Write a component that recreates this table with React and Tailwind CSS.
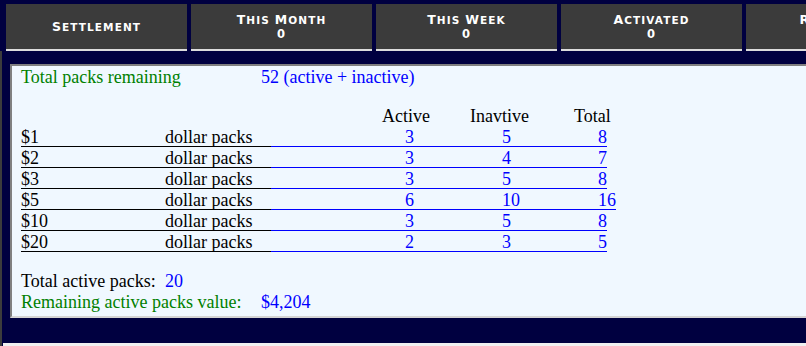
const tabs = [
    { label: 'Settlement' },
    { label: 'This Month', value: '0' },
    { label: 'This Week', value: '0' },
    { label: 'Activated', value: '0' },
    { label: 'Returned', value: '0' },
];

const packs = [
    { amount: '$1', active: 3, inactive: 5, total: 8 },
    { amount: '$2', active: 3, inactive: 4, total: 7 },
    { amount: '$3', active: 3, inactive: 5, total: 8 },
    { amount: '$5', active: 6, inactive: 10, total: 16 },
    { amount: '$10', active: 3, inactive: 5, total: 8 },
    { amount: '$20', active: 2, inactive: 3, total: 5 },
];

// hand-rolled small caps: big first letter, smaller uppercase rest
function SmallCaps({ text }) {
    return (
        <span>
            {text.split(' ').map((word, i) => (
                <span key={i}>
                    {i > 0 && <span className="text-[10.5px]"> </span>}
                    <span className="text-[12.5px]">{word[0]}</span>
                    <span className="text-[10.5px] uppercase">{word.slice(1)}</span>
                </span>
            ))}
        </span>
    );
}

function Tab({ label, value }) {
    return (
        <div className="w-[181px] h-[47px] shrink-0 bg-[#3b3b3b] border-b-2 border-[#dcdcdc] flex flex-col items-center justify-center text-white font-bold leading-[14px] tracking-[1.1px] whitespace-nowrap font-['DejaVu_Sans',Verdana,sans-serif]">
            <SmallCaps text={label} />
            {value !== undefined && <span className="text-[11.5px]">{value}</span>}
        </div>
    );
}

function PackRow({ row }) {
    return (
        <div className="flex h-[21px] pt-[2px] leading-[18px]">
            <span className="w-[144px] border-b border-black">{row.amount}</span>
            <span className="w-[106px] border-b border-black">dollar packs</span>
            <span className="flex border-b border-[#0000ff] text-[#0000ff]">
                <span className="w-[134px]" />
                <span className="w-[97px]">{row.active}</span>
                <span className="w-[96px]">{row.inactive}</span>
                <span>{row.total}</span>
            </span>
        </div>
    );
}

export default function App() {
    return (
        <div className="w-[806px] h-[346px] overflow-hidden bg-[#000040] flex flex-col">
            {/* Tabs */}
            <div className="flex gap-[4px] pt-[4px] pl-[6px]">
                {tabs.map(t => <Tab key={t.label} {...t} />)}
            </div>

            {/* Body */}
            <div className="flex-1 flex flex-col border-l-2 border-[#3c3c3c]">
                <div className="ml-[8px] mt-[13px] w-[820px] h-[254px] bg-[#f0f8ff] border-2 border-t-[#808080] border-l-[#808080] border-b-[#d4d4d4] border-r-[#d4d4d4] pl-[9px] pt-[1px] text-[18px] text-black font-['Liberation_Serif','Times_New_Roman',serif]">
                    <div className="flex leading-[21px]">
                        <span className="w-[240px] text-[#008000]">Total packs remaining</span>
                        <span className="text-[#0000ff]">52 (active + inactive)</span>
                    </div>

                    <div className="flex mt-[18px] h-[20px] leading-[20px]">
                        <span className="w-[361px]" />
                        <span className="w-[88px]">Active</span>
                        <span className="w-[104px]">Inavtive</span>
                        <span>Total</span>
                    </div>
                    {packs.map(p => <PackRow key={p.amount} row={p} />)}

                    <div className="flex mt-[19px] leading-[21px]">
                        <span className="w-[144px]">Total active packs:</span>
                        <span className="text-[#0000ff]">20</span>
                    </div>
                    <div className="flex leading-[21px]">
                        <span className="w-[240px] text-[#008000]">Remaining active packs value:</span>
                        <span className="text-[#0000ff]">$4,204</span>
                    </div>
                </div>
                <div className="mt-auto h-[3px] ml-[1px] bg-[#f0f0f0]" />
            </div>
        </div>
    );
}
